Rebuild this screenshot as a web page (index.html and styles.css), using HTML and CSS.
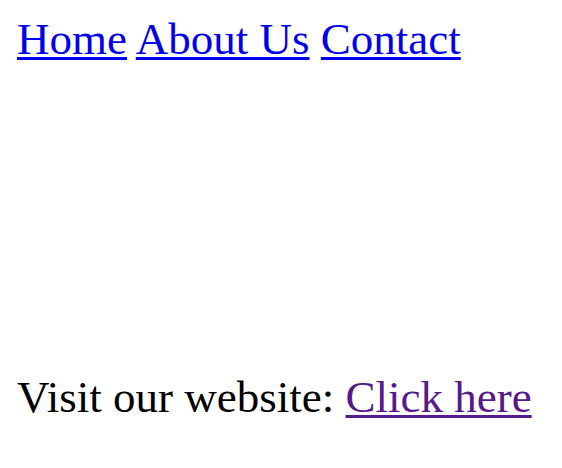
FILE: index.html
```html
<!DOCTYPE html>
<html>
<head>
<meta charset="utf-8">
<link rel="stylesheet" href="styles.css">
</head>
<body>
<nav class="nav"><a class="link" href="#home">Home</a> <a class="link" href="#about">About Us</a> <a class="link" href="#contact">Contact</a></nav>
<p class="visit">Visit our website: <a class="link visited" href="#site">Click here</a></p>
</body>
</html>
```
FILE: styles.css
```css
html, body {
  margin: 0;
  background: #fff;
}
body {
  padding: 13px 17px;
  font-family: "Liberation Serif", "Times New Roman", serif;
  font-size: 45px;
  color: #000;
}
.nav {
  line-height: normal;
}
.link {
  color: #0000ee;
  text-decoration: underline;
  text-decoration-thickness: 3px;
  text-underline-offset: 3px;
}
.link.visited {
  color: #551a8b;
}
.visit {
  margin: 306px 0 0;
}
```
